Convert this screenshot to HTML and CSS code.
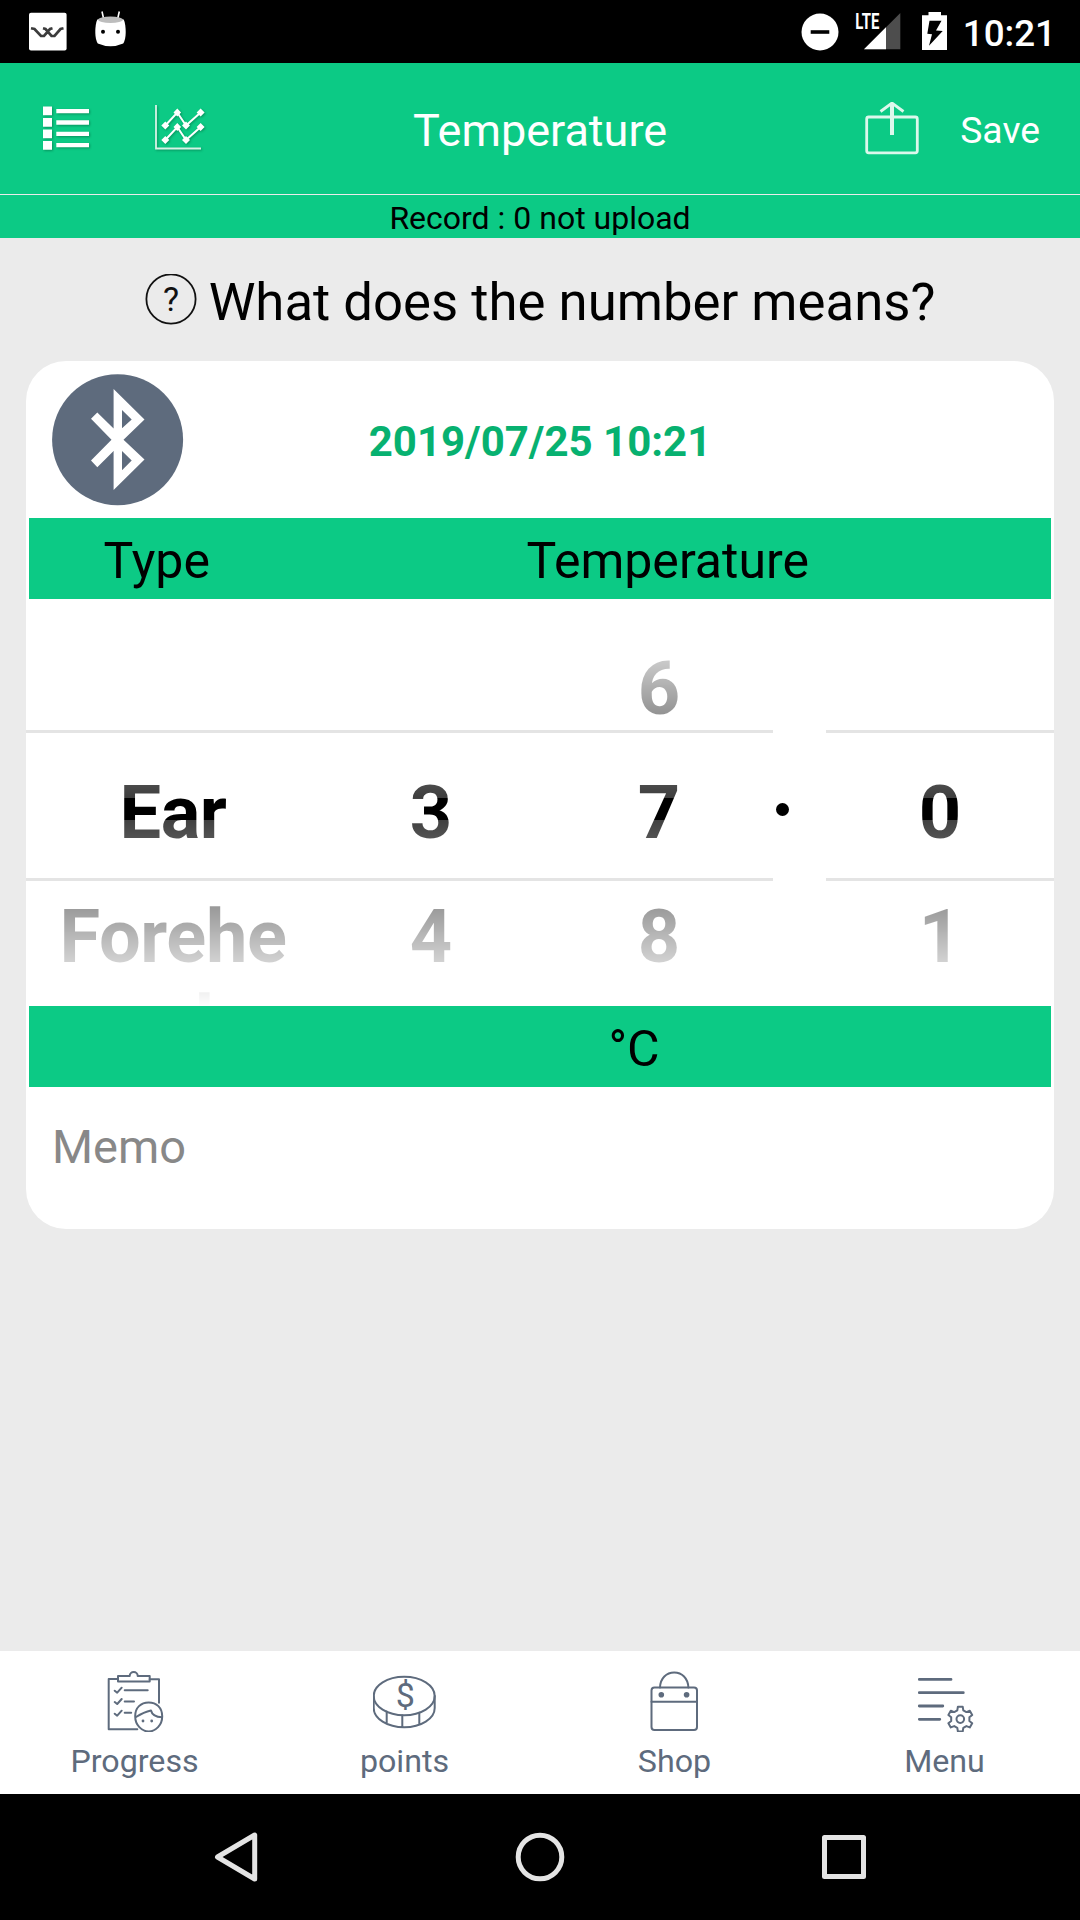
FILE: index.html
```html
<!DOCTYPE html>
<html lang="en">
<head>
<meta charset="utf-8">
<title>Temperature</title>
<link rel="stylesheet" href="styles.css">
</head>
<body>
<div class="status-bar">
  <svg class="status-left" width="140" height="63" viewBox="0 0 140 63">
    <rect x="29" y="12.7" width="37.6" height="37.8" rx="2" fill="#fff"/>
    <path d="M31 28.300l3.500.7 6.500 7h3l6-7 2.500-.700M43 28.300l2.500.7 6 7h3l6-7 3-.700" fill="none" stroke="#3c3c3c" stroke-width="2.700"/>
    <path d="M102 11.500l2 9M119.300 11.500l-2 9" stroke="#fff" stroke-width="1.600"/>
    <path d="M97.300 19.500q13.200-3 26.400 0Q125.800 24 125.700 33q-.2 7-2.500 10.500-12.700 5.500-25.400 0Q95.500 40 95.300 33q-.1-9 2-13.500z" fill="#fff"/>
    <ellipse cx="110.500" cy="19.800" rx="12.300" ry="3.200" fill="#bdbdbd"/>
    <circle cx="103" cy="31.700" r="2" fill="#000"/><circle cx="118" cy="31.700" r="2" fill="#000"/>
  </svg>
  <div class="status-right">
    <svg width="150" height="63" viewBox="800 0 150 63">
      <circle cx="820" cy="32" r="18.500" fill="#fff"/>
      <path d="M810.700 32h18.600" stroke="#000" stroke-width="3.600"/>
      <path d="M864 49.300h36.300V13z" fill="#4d4d4d"/>
      <path d="M864 49.300h22V27.300z" fill="#fff"/>
      <text class="lte" x="855.300" y="29.300" textLength="24" lengthAdjust="spacingAndGlyphs">LTE</text>
      <path d="M922 15.300h6.500v-3.300h12.500v3.300h6V50h-25z" fill="#fff"/>
      <path d="M929.500 20.700h12L936 30.500l6.700.5L929 45.700l3-11.400-4.700-.6z" fill="#000"/>
    </svg>
    <span class="clock">10:21</span>
  </div>
</div>

<header class="app-bar">
  <div class="app-tools">
    <svg class="shadowed" width="48" height="48" viewBox="42 103 48 48" fill="#fff">
      <path d="M43 106.500h9v8.700h-9zM43 118h9v8.700h-9zM43 129.500h9v8.700h-9zM43 141h9v8.700h-9zM56.300 109H89v4.300H56.300zM56.300 120.300H89v4.400H56.300zM56.300 131.700H89v4.300H56.300zM56.300 143H89v4.300H56.300z"/>
    </svg>
    <svg class="shadowed" width="54" height="48" viewBox="153 103 54 48">
      <path d="M156 105v43.500h45" fill="none" stroke="#d7f3e7" stroke-width="1.800"/>
      <path d="M165.300 125.500l12-13 8.700 13 14.600-13M165.300 140l12-13 8.700 13 14.600-13" fill="none" stroke="#fff" stroke-width="2"/>
      <path d="M165.300 121.500l4 4-4 4-4-4zM177.300 108.500l3.800 4-3.800 4-3.800-4zM186 121.500l4 4-4 4-4-4zM200.600 108.500l4 4-4 4-4-4zM165.300 136l4 4-4 4-4-4zM177.300 123l3.800 4-3.800 4-3.800-4zM186 136l4 4-4 4-4-4zM200.600 123l4 4-4 4-4-4z" fill="#fff"/>
    </svg>
  </div>
  <h1 class="app-title">Temperature</h1>
  <div class="app-actions">
    <svg width="54" height="54" viewBox="864.500 102 54 54" fill="none" stroke="#dcf8ec">
      <rect x="866.200" y="117" width="50.600" height="35.800" rx="2" stroke-width="2.800"/>
      <path d="M891.500 103v32" stroke-width="4"/>
      <path d="M880 111.500l11.500-8.500 11.500 8.500" stroke-width="2.800"/>
    </svg>
    <span class="save">Save</span>
  </div>
</header>
<div class="record-bar">Record : 0 not upload</div>

<main class="content">
  <div class="question">
    <svg width="52" height="52" viewBox="0 1 52 52">
      <circle cx="26" cy="26" r="24.600" fill="none" stroke="#111" stroke-width="1.800"/>
      <text class="mark" x="26" y="38" text-anchor="middle">?</text>
    </svg>
    <span>What does the number means?</span>
  </div>

  <section class="card">
    <div class="card-head">
      <svg class="bluetooth" width="132" height="132" viewBox="52 374 132 132">
        <circle cx="117.600" cy="439.700" r="65.500" fill="#5e6b7d"/>
        <path fill="#fff" fill-rule="evenodd" d="M113.600 389l30.900 30.500-21 20.200 21 19.800L113.600 490v-39l-16.300 16.200-6.300-6.700 20.500-20.800L91 418.800l6.300-6.300 16.300 16zM122 410v18.200l9.700-8.700zM122 451v19.300l9.700-9.800z"/>
      </svg>
      <time class="date">2019/07/25 10:21</time>
    </div>
    <div class="band band-head"><span>Type</span><span>Temperature</span></div>
    <div class="pickers">
      <div class="picker picker-type"><div class="wheel">
        <span class="item"></span><span class="item">Ear</span><span class="item wrap">Forehe<br>ad</span>
      </div></div>
      <div class="picker"><div class="wheel">
        <span class="item"></span><span class="item">3</span><span class="item">4</span>
      </div></div>
      <div class="picker"><div class="wheel">
        <span class="item">6</span><span class="item">7</span><span class="item">8</span>
      </div></div>
      <div class="point"><i></i></div>
      <div class="picker"><div class="wheel">
        <span class="item"></span><span class="item">0</span><span class="item">1</span>
      </div></div>
    </div>
    <div class="band band-unit">°C</div>
    <div class="memo">Memo</div>
  </section>
</main>

<nav class="tabs">
  <a class="tab">
    <svg width="64" height="64" viewBox="0 0 64 64">
      <path d="M15 11H5.700v50.300h28.600M46.700 11.300H56v23.400"/>
      <path d="M15 8h11.700a4 4 0 0 1 8 0h12v5.500H15z"/>
      <path d="M11.700 22.700l2.500 2 4.500-5M11.700 34l2.500 2 4.500-5M11.700 45.700l2.500 2 4.500-5"/>
      <path d="M21.700 22.300h23M21.700 33.500H31M21.700 44.700h6.500"/>
      <path d="M32.200 48.500C32 39.500 38 34.500 45.700 34.500S59.300 39.500 59.200 48.500c0 8.500-6.500 15-13.500 15s-13.500-6.500-13.500-15z"/>
      <path d="M33 49q8-5 15-6.500 1.500 6.500 11 6.700"/>
      <circle cx="40" cy="53" r="1.400" class="solid"/><circle cx="48.700" cy="53" r="1.400" class="solid"/>
    </svg>
    <span>Progress</span>
  </a>
  <a class="tab">
    <svg width="64" height="64" viewBox="0 0 64 64">
      <ellipse cx="31.200" cy="28" rx="30.500" ry="19.300"/>
      <path d="M.7 28v12a30.500 19.300 0 0 0 61 0V28M13.700 43.500V55M29.300 47.500v11.700M46.300 44.700v11.500"/>
      <text class="dollar" x="32.300" y="39" text-anchor="middle">$</text>
    </svg>
    <span>points</span>
  </a>
  <a class="tab">
    <svg width="64" height="64" viewBox="0 0 64 64">
      <rect x="8.500" y="19.500" width="45.500" height="42.500" rx="3"/>
      <path d="M8.500 33.700H54M17 19.500C17.300 10 23.500 4.500 31.200 4.500S45 10 45.400 19.500"/>
      <circle cx="18.300" cy="26.800" r="2.800" class="solid"/><circle cx="43.600" cy="26.800" r="2.800" class="solid"/>
    </svg>
    <span>Shop</span>
  </a>
  <a class="tab">
    <svg width="64" height="64" viewBox="0 0 64 64">
      <path class="thick" d="M6.300 11.400h31.700M6.300 24.700h44M6.300 38h23.500M6.300 51.300h20.500"/>
      <circle cx="47.300" cy="51.100" r="3.800"/>
      <path transform="translate(47.300 51.100)" d="M-3-8.800l.6-3.600h4.800L3-8.800l3.100 1.800 3.400-1.300 2.400 4.200L9.100-1.800v3.600l2.800 2.300-2.400 4.200-3.400-1.300L3 8.800l-.6 3.600h-4.800L-3 8.800-6.100 7l-3.400 1.300-2.400-4.200 2.800-2.300v-3.600l-2.800-2.300 2.400-4.200 3.400 1.300z"/>
    </svg>
    <span>Menu</span>
  </a>
</nav>

<footer class="system-nav">
  <svg width="52" height="52" viewBox="210 1831 52 52"><path d="M254.700 1835v44L217.500 1857z"/></svg>
  <svg width="52" height="52" viewBox="514 1831 52 52"><circle cx="540" cy="1857" r="21.800"/></svg>
  <svg width="52" height="52" viewBox="818 1831 52 52"><rect x="824.500" y="1837.500" width="39" height="39"/></svg>
</footer>
</body>
</html>
```

FILE: styles.css
```css
* { box-sizing: border-box; }

body {
  margin: 0;
  width: 1080px;
  height: 1920px;
  overflow: hidden;
  display: flex;
  flex-direction: column;
  background: #ebebeb;
  color: #000;
  font-family: Roboto, "Liberation Sans", sans-serif;
}

svg { display: block; flex: none; }

.status-bar {
  height: 63px;
  flex: none;
  display: flex;
  justify-content: space-between;
  background: #000;
  color: #fff;
}
.status-right { display: flex; align-items: center; padding-right: 24px; }
.clock {
  width: 106px;
  padding-top: 4px;
  text-align: right;
  font-size: 36.75px;
  font-weight: 500;
}
.lte {
  font-size: 22px;
  font-weight: 700;
  fill: #fff;
  stroke: #000;
  stroke-width: 3px;
  paint-order: stroke;
}

.app-bar {
  height: 131px;
  flex: none;
  display: grid;
  grid-template-columns: 1fr auto 1fr;
  align-items: center;
  background: #0cca85;
  color: #fff;
}
.app-tools { display: flex; gap: 63px; padding: 0 0 3px 42px; }
.shadowed { filter: drop-shadow(1px 1px 1px rgba(0, 60, 30, 0.4)); }
.app-title {
  margin: 0;
  padding-top: 4px;
  font-size: 45px;
  font-weight: 400;
}
.app-actions {
  display: flex;
  justify-content: flex-end;
  align-items: center;
  gap: 41px;
  padding-right: 40px;
}
.save { padding-top: 2px; font-size: 37.3px; }

.record-bar {
  height: 44px;
  flex: none;
  border-top: 1px solid #ebebeb;
  background: #0cca85;
  text-align: center;
  font-size: 32px;
  line-height: 47px;
}

.content { flex: 1; padding: 0 26px; }
.question {
  height: 123px;
  display: flex;
  justify-content: center;
  align-items: center;
  gap: 12px;
  font-size: 52.7px;
}
.question span { padding-top: 4px; }
.mark { font-size: 34px; fill: #111; }

.card {
  height: 868px;
  display: flex;
  flex-direction: column;
  border-radius: 40px;
  background: #fff;
}
.card-head {
  height: 157px;
  display: grid;
  grid-template-columns: 1fr auto 1fr;
  align-items: center;
  padding: 0 26px;
}
.date { padding-top: 4px; color: #07b170; font-size: 42px; font-weight: 700; }

.band {
  height: 81px;
  margin: 0 3px;
  padding-top: 5px;
  background: #0cca85;
  font-size: 50px;
  line-height: 76px;
  text-align: center;
}
.band-head { display: grid; grid-template-columns: 1fr 3fr; }
.band-unit { padding-left: 188px; }

.pickers {
  height: 407px;
  display: grid;
  grid-template-columns: 291px 228px 228px 53px 228px;
}
.picker {
  height: 407px;
  overflow: hidden;
  background: linear-gradient(#e4e4e4, #e4e4e4) 0 131px / 100% 3px no-repeat,
              linear-gradient(#e4e4e4, #e4e4e4) 0 279px / 100% 3px no-repeat;
}
.picker-type { padding-left: 3px; letter-spacing: -0.4px; }
.wheel {
  height: 407px;
  display: flex;
  flex-direction: column;
  padding-top: 28px;
  overflow: hidden;
  font-size: 74px;
  font-weight: 700;
  text-align: center;
  mask-image: linear-gradient(transparent 10px, rgba(0, 0, 0, 0.76) 199px, #000 199px, #000 221px, rgba(0, 0, 0, 0.75) 221px, transparent 407px);
}
.item { height: 124px; flex: none; line-height: 124px; }
.wrap { padding-top: 19px; line-height: 86px; }
.point { padding: 204px 0 0 3px; }
.point i { display: block; width: 13px; height: 13px; border-radius: 50%; background: #000; }

.memo {
  padding: 0 26px;
  color: #888;
  font-size: 47px;
  line-height: 120px;
}

.tabs {
  height: 143px;
  flex: none;
  display: grid;
  grid-template-columns: repeat(4, 1fr);
  background: #fff;
  color: #5e6b7d;
}
.tab {
  display: flex;
  flex-direction: column;
  align-items: center;
  padding-top: 17px;
  font-size: 32.2px;
  line-height: 59px;
}
.tab span { margin-left: -1px; }
.tab svg { fill: none; stroke: #5e6b7d; stroke-width: 2; stroke-linecap: round; stroke-linejoin: round; }
.tab .solid { fill: #5e6b7d; stroke: none; }
.tab .thick { stroke-width: 2.8; }
.tab .dollar { font-size: 34px; fill: #5e6b7d; stroke: none; }

.system-nav {
  height: 126px;
  flex: none;
  display: flex;
  justify-content: center;
  align-items: center;
  gap: 252px;
  background: #000;
}
.system-nav svg { fill: none; stroke: #e4e4e4; stroke-width: 5; stroke-linejoin: round; }
```
